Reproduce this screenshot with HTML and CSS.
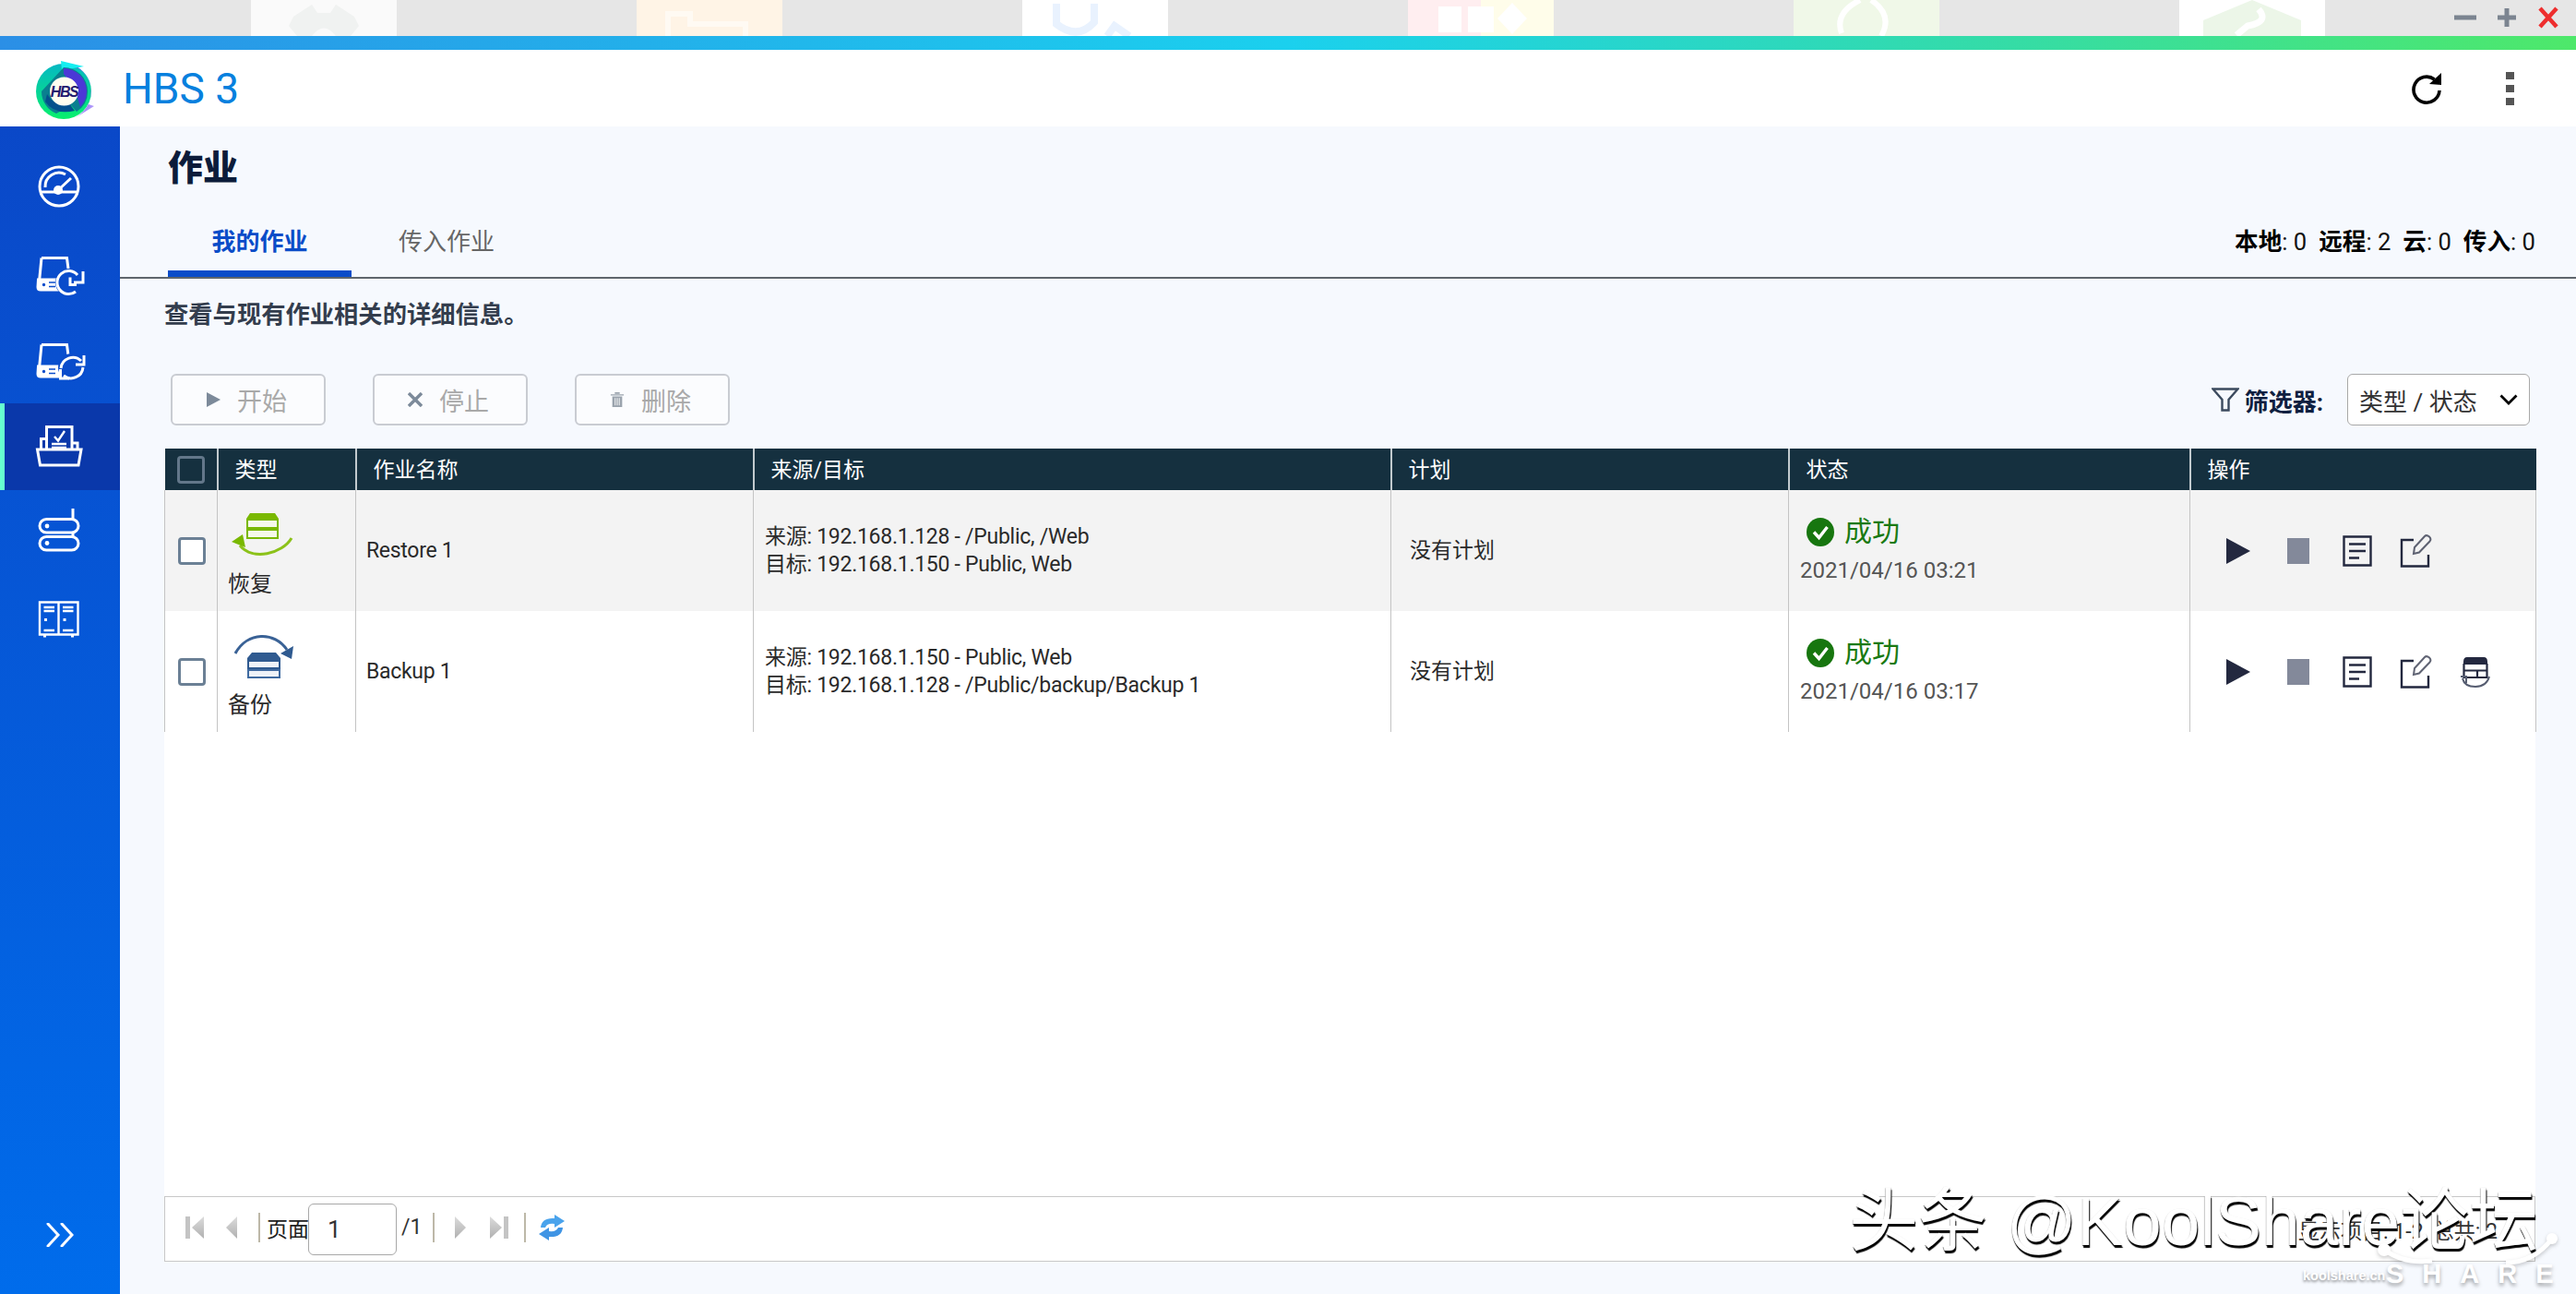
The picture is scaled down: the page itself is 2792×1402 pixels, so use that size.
FILE: index.html
```html
<!DOCTYPE html>
<html lang="zh-CN">
<head>
<meta charset="utf-8">
<title>HBS 3</title>
<link rel="stylesheet" href="styles.css">
</head>
<body>
<svg class="defs" width="0" height="0" aria-hidden="true">
  <defs>
    <symbol id="i-play" viewBox="0 0 26 28"><path d="M0 0 L26 14 L0 28 Z"/></symbol>
    <symbol id="i-doc" viewBox="0 0 32 34"><path d="M1.5 1.5 H30.500 V32.500 H1.500 Z M7 9.500 H25 M7 17 H25 M7 24.500 H18" fill="none" stroke-width="2.400"/></symbol>
    <symbol id="i-edit" viewBox="0 0 36 36"><path d="M15 6 H2 V34.500 H31 V22" fill="none" stroke-width="2.400"/><path d="M15 21 L16 14 L27 2 Q29 0 32 2.500 Q34.500 5 32.500 7.500 L21 19.500 Z" fill="none" stroke-width="2" opacity=".72"/></symbol>
    <symbol id="i-ok" viewBox="0 0 30 31"><ellipse cx="15" cy="15.500" rx="15" ry="15.500" fill="#17760f"/><path d="M8 15.500 L13.500 21.500 L22.500 10" fill="none" stroke="#fff" stroke-width="3.400"/></symbol>
    <symbol id="i-device" viewBox="0 0 70 70"><path d="M15 18.500 H42.500 L44.500 34 M15 18.500 L12.500 44" fill="none" stroke="#fff" stroke-width="3"/><path d="M11.500 42 H33 V53 H14 Q11 53 11 50 Z" fill="#fff"/><circle cx="17.500" cy="47.500" r="3.200" fill="#0a4ccb"/><path d="M23 45 H30 M23 49.500 H30" stroke="#0a4ccb" stroke-width="1.600"/></symbol>
  </defs>
</svg>

<div class="backdrop">
  <div class="tile tile-white"><svg class="tile-glyph" viewBox="0 0 158 39"><path d="M66 5 L72 14 L86 14 L92 5 L112 18 L117 28 L108 39 L50 39 L41 28 L46 18 Z" fill="#f0f2f1"/><path d="M66 39 Q79 22 92 39 Z" fill="#fafafa"/></svg></div>
  <div class="tile tile-peach"><svg class="tile-glyph" viewBox="0 0 158 39"><path d="M34 39 V15 H58 V26 H118 V39" fill="none" stroke="#fffaf3" stroke-width="6"/></svg></div>
  <div class="tile tile-pure"><svg class="tile-glyph" viewBox="0 0 158 39"><path d="M37 4 V26 Q60 44 78 24 V4 M92 39 L100 28 L116 39" fill="none" stroke="#e9f2fe" stroke-width="8"/></svg></div>
  <div class="tile tile-pink"><svg class="tile-glyph" viewBox="0 0 158 39"><path d="M33 7 H58 V35 H33 Z M65 7 H93 V35 H65 Z M113 3 L129 20 L113 37 L97 20 Z" fill="#fff"/></svg></div>
  <div class="tile tile-green"><svg class="tile-glyph" viewBox="0 0 158 39"><path d="M52 36 Q44 14 72 0 M95 39 Q108 16 84 0" fill="none" stroke="#fff" stroke-width="6"/></svg></div>
  <div class="tile tile-pure"><svg class="tile-glyph" viewBox="0 0 158 39"><path d="M26 39 V22 L79 0 L132 22 V39 Z" fill="#ecf6e8"/><path d="M86 10 Q98 24 74 28 L62 38" fill="none" stroke="#fff" stroke-width="7"/></svg></div>
  <div class="win-ctrls">
    <svg class="win-ctrl" viewBox="0 0 24 24"><path d="M0 12 H24" stroke="#7b8490" stroke-width="5"/></svg>
    <svg class="win-ctrl" viewBox="0 0 24 24"><path d="M2 12 H22 M12 2 V22" stroke="#7b8490" stroke-width="5"/></svg>
    <svg class="win-ctrl" viewBox="0 0 24 24"><path d="M3 2 L21 22 M21 2 L3 22" stroke="#ee2e2e" stroke-width="4.500"/></svg>
  </div>
</div>
<div class="accent"></div>

<header class="app-header">
  <svg class="logo" viewBox="0 0 64 64">
    <defs>
      <linearGradient id="lg-a" x1="0" y1="0" x2="0" y2="1"><stop offset="0" stop-color="#06b8c4"/><stop offset="1" stop-color="#07f06c"/></linearGradient>
      <linearGradient id="lg-b" x1="0" y1="0" x2="1" y2="1"><stop offset="0" stop-color="#2e46d8"/><stop offset="1" stop-color="#c4a4ff"/></linearGradient>
    </defs>
    <circle cx="30" cy="33" r="30" fill="url(#lg-a)"/>
    <path d="M28 3 Q58 6 60 33 Q59 52 42 62 L63 49 L57 47 Q66 20 44 6 Z" fill="url(#lg-b)"/>
    <path d="M27 0 L52 6 L28 10 Z" fill="#14eef0"/>
    <path d="M30 7 A26 26 0 0 1 56 33 A26 26 0 0 1 44 55 L38 48 L22 57 A26 26 0 0 1 6 33 Z" fill="#0a7f8f"/>
    <path d="M30 8 A25 25 0 0 1 55 33 A25 25 0 0 1 48 50 L42 30 L30 14 Z" fill="#4b38d6"/>
    <path d="M10 44 Q20 59 42 54 L36 46 Q20 50 12 36 Z" fill="#04508c"/>
    <circle cx="30.500" cy="33" r="15.500" fill="#fffdf0"/>
    <text class="logo-text" x="30.500" y="38.500">HBS</text>
  </svg>
  <h1 class="app-name">HBS 3</h1>
  <div class="header-actions">
    <svg class="refresh" viewBox="0 0 34 34"><path d="M25.500 7 A14 14 0 1 0 31 19" fill="none" stroke="#000" stroke-width="3.600"/><path d="M20 12 L33 0 V13 Z" fill="#000"/></svg>
    <div class="dots"><span></span><span></span><span></span></div>
  </div>
</header>

<div class="shell">
  <aside class="sidebar">
    <nav class="nav">
      <a class="nav-item"><svg class="nav-icon" viewBox="0 0 70 70" fill="none" stroke="#fff" stroke-width="3"><circle cx="34" cy="35" r="21"/><path d="M13 41 H55"/><circle cx="33" cy="39" r="5" fill="#fff" stroke="none"/><path d="M33 39 L47 26 M19 36 A15 15 0 0 1 41 22"/></svg></a>
      <a class="nav-item"><svg class="nav-icon" viewBox="0 0 70 70" fill="none" stroke="#fff" stroke-width="3"><use href="#i-device"/><circle cx="45" cy="45" r="15" fill="#0a4ccb" stroke="none"/><path d="M54 37 A12.500 12.500 0 1 0 52 55"/><path d="M46 39.500 V47.500 H53"/><path d="M60 33 V45 H50"/></svg></a>
      <a class="nav-item"><svg class="nav-icon" viewBox="0 0 70 70" fill="none" stroke="#fff" stroke-width="3"><use href="#i-device"/><circle cx="48" cy="43" r="15" fill="#0a4ccb" stroke="none"/><path d="M36 44 A13 13 0 0 1 58 36 M60 43 A13 13 0 0 1 39 52"/><path d="M61 30 V40 H52 M35.500 45 V55 H45"/></svg></a>
      <a class="nav-item nav-active"><svg class="nav-icon" viewBox="0 0 70 70" fill="none" stroke="#fff" stroke-width="3"><path d="M10.500 38 H58 L55 55 H13.500 Z"/><path d="M20.500 38 V13.500 H48 V38 M20 26.500 H14.500 V38 M48 31 H54 V38"/><path d="M29 24 L33 28.500 L40 18 M26 32 H42 M26 36 H42" stroke-width="2.400"/></svg></a>
      <a class="nav-item"><svg class="nav-icon" viewBox="0 0 70 70" fill="none" stroke="#fff" stroke-width="3"><rect x="13" y="19.500" width="42" height="14.500" rx="7.250"/><rect x="13" y="38.500" width="42" height="14.500" rx="7.250"/><path d="M49 8 V20 M49 34 V38"/><circle cx="21" cy="27" r="2.400" fill="#fff" stroke="none"/><circle cx="21" cy="45.500" r="2.400" fill="#fff" stroke="none"/></svg></a>
      <a class="nav-item"><svg class="nav-icon" viewBox="0 0 70 70" fill="none" stroke="#fff" stroke-width="2.400"><path d="M13 15.500 H54.500 V50.500 H13 Z M33.500 15.500 V50.500"/><path d="M17.500 21 H29 M17.500 25 H29 M38 21 H49.500 M38 25 H49.500 M17.500 46 H29 M38 46 H49.500"/><path d="M18 34.500 H21 M38.500 34.500 H41.500" stroke-width="3"/><path d="M17 52 H20 M47 52 H50" stroke-width="3"/></svg></a>
    </nav>
    <svg class="collapse" viewBox="0 0 30 26" fill="none" stroke="#fff" stroke-width="3" stroke-linecap="round"><path d="M2 1 L13 13 L2 25 M17 1 L28 13 L17 25"/></svg>
  </aside>

  <main class="main">
    <h2 class="page-title">作业</h2>
    <div class="tabbar">
      <div class="tabs">
        <span class="tab tab-active">我的作业</span>
        <span class="tab">传入作业</span>
      </div>
      <div class="counters">
        <span><b>本地</b>: 0</span><span><b>远程</b>: 2</span><span><b>云</b>: 0</span><span><b>传入</b>: 0</span>
      </div>
    </div>

    <div class="content">
      <p class="desc">查看与现有作业相关的详细信息。</p>
      <div class="toolbar">
        <div class="btn-group">
          <button class="btn"><svg class="btn-icon" viewBox="0 0 16 16"><path d="M1 0 L16 8 L1 16 Z" fill="#7c8a9a"/></svg>开始</button>
          <button class="btn"><svg class="btn-icon" viewBox="0 0 16 16"><path d="M1 1 L15 15 M15 1 L1 15" stroke="#7c8a9a" stroke-width="3.400"/></svg>停止</button>
          <button class="btn"><svg class="btn-icon" viewBox="0 0 16 18"><path d="M2 5 H14 V18 H2 Z M0 2.500 H16 V4 H0 Z M5 0 H11 V2 H5 Z" fill="#9aa3ad"/><path d="M5.500 7 V16 M8 7 V16 M10.500 7 V16" stroke="#fff" stroke-width="1"/></svg>删除</button>
        </div>
        <div class="filter">
          <svg class="filter-icon" viewBox="0 0 30 26"><path d="M1.500 1.500 H28.500 L18.500 13 V24.500 L11.500 24.500 V13 Z" fill="none" stroke="#3b4a5e" stroke-width="2.400"/></svg>
          <span class="filter-label">筛选器:</span>
          <div class="select"><span>类型 / 状态</span><svg class="chevron" viewBox="0 0 20 12"><path d="M1.500 1.500 L10 10 L18.500 1.500" fill="none" stroke="#000" stroke-width="2.800"/></svg></div>
        </div>
      </div>

      <div class="table-panel">
        <table class="jobs">
          <colgroup>
            <col class="c-check"><col class="c-type"><col class="c-name"><col class="c-src"><col class="c-plan"><col class="c-status"><col class="c-ops">
          </colgroup>
          <thead>
            <tr>
              <th class="th-check"><span class="check check-head"></span></th>
              <th>类型</th><th>作业名称</th><th>来源/目标</th><th>计划</th><th>状态</th><th>操作</th>
            </tr>
          </thead>
          <tbody>
            <tr class="row-alt">
              <td class="td-check"><span class="check"></span></td>
              <td class="td-type">
                <svg class="type-icon" viewBox="0 0 70 52">
                  <path d="M19 9 L23 3 H50 L54 9 V11 H19 Z" fill="#79b800"/>
                  <rect x="20" y="10" width="33" height="9" fill="#f5f8ea" stroke="#79b800" stroke-width="2"/>
                  <rect x="20" y="21" width="33" height="9" fill="#f5f8ea" stroke="#79b800" stroke-width="2"/>
                  <path d="M68 30 C58 47 26 55 12 38" fill="none" stroke="#8cc21a" stroke-width="3"/>
                  <path d="M3 34 L15 26 L18 40 Z" fill="#79b800"/>
                </svg>
                <span class="type-label">恢复</span>
              </td>
              <td class="td-name">Restore 1</td>
              <td class="td-src">来源: 192.168.1.128 - /Public, /Web<br>目标: 192.168.1.150 - Public, Web</td>
              <td class="td-plan">没有计划</td>
              <td class="td-status">
                <div class="status"><svg class="ok-icon"><use href="#i-ok"/></svg><span class="status-text">成功</span></div>
                <div class="status-date">2021/04/16 03:21</div>
              </td>
              <td class="td-ops">
                <div class="ops">
                  <svg class="op op-play"><use href="#i-play"/></svg>
                  <span class="op-stop"></span>
                  <svg class="op op-doc"><use href="#i-doc"/></svg>
                  <svg class="op op-edit"><use href="#i-edit"/></svg>
                </div>
              </td>
            </tr>
            <tr>
              <td class="td-check"><span class="check"></span></td>
              <td class="td-type">
                <svg class="type-icon" viewBox="0 0 70 52">
                  <path d="M7 24 C20 0 50 0 63 20" fill="none" stroke="#3a6296" stroke-width="3"/>
                  <path d="M70 16 L68 30 L56 24 Z" fill="#2f5a90"/>
                  <path d="M20 29 L25 23 H51 L56 29 V33 H20 Z" fill="#2f5a90"/>
                  <rect x="21" y="32" width="34" height="8" fill="#eef2f8" stroke="#2f5a90" stroke-width="2"/>
                  <rect x="21" y="42" width="34" height="8" fill="#eef2f8" stroke="#3f6aa0" stroke-width="2"/>
                </svg>
                <span class="type-label">备份</span>
              </td>
              <td class="td-name">Backup 1</td>
              <td class="td-src">来源: 192.168.1.150 - Public, Web<br>目标: 192.168.1.128 - /Public/backup/Backup 1</td>
              <td class="td-plan">没有计划</td>
              <td class="td-status">
                <div class="status"><svg class="ok-icon"><use href="#i-ok"/></svg><span class="status-text">成功</span></div>
                <div class="status-date">2021/04/16 03:17</div>
              </td>
              <td class="td-ops">
                <div class="ops">
                  <svg class="op op-play"><use href="#i-play"/></svg>
                  <span class="op-stop"></span>
                  <svg class="op op-doc"><use href="#i-doc"/></svg>
                  <svg class="op op-edit"><use href="#i-edit"/></svg>
                  <svg class="op op-sync" viewBox="0 0 32 34"><path d="M3 6 Q3 1 7 1 H25 Q29 1 29 6 V9 H3 Z" fill="#23283f"/><path d="M3.500 8 V23 H28.500 V8 M3.500 15.500 H28.500 M18 15.500 V23" fill="none" stroke="#23283f" stroke-width="2.200"/><path d="M2 24 Q4 33 16 33 Q28 33 31 22" fill="none" stroke="#555c70" stroke-width="2"/><path d="M0 22 H6 V29" fill="none" stroke="#555c70" stroke-width="2"/></svg>
                </div>
              </td>
            </tr>
          </tbody>
        </table>
      </div>

      <div class="pager">
        <div class="pager-left">
          <svg class="pg pg-first" viewBox="0 0 20 24"><rect width="5" height="24" fill="#c4c4c4"/><path d="M20 0 V24 L7 12 Z" fill="url(#pg-grad)"/></svg>
          <svg class="pg pg-prev" viewBox="0 0 12 24"><path d="M12 0 V24 L0 12 Z" fill="url(#pg-grad)"/></svg>
          <span class="pg-sep pg-sep-a"></span>
          <span class="pg-label">页面</span>
          <input class="pg-input" value="1" aria-label="页面">
          <span class="pg-total">/1</span>
          <span class="pg-sep pg-sep-b"></span>
          <svg class="pg pg-next" viewBox="0 0 12 24"><path d="M0 0 V24 L12 12 Z" fill="url(#pg-grad)"/></svg>
          <svg class="pg pg-last" viewBox="0 0 20 24"><path d="M0 0 V24 L13 12 Z" fill="url(#pg-grad)"/><rect x="15" width="5" height="24" fill="#c4c4c4"/></svg>
          <span class="pg-sep pg-sep-c"></span>
          <svg class="pg-refresh" viewBox="0 0 30 28" fill="none"><path d="M3 14 Q4 3 18 4 L18 0 L29 7 L18 14 L18 10 Q10 9 8 14 Z" fill="#4aa3ec"/><path d="M27 14 Q26 25 12 24 L12 28 L1 21 L12 14 L12 18 Q20 19 22 14 Z" fill="#3f94e4"/></svg>
          <svg class="defs" width="0" height="0" aria-hidden="true"><defs><linearGradient id="pg-grad" x1="0" y1="0" x2="0" y2="1"><stop offset="0" stop-color="#dcdcdc"/><stop offset="1" stop-color="#b0b0b0"/></linearGradient></defs></svg>
        </div>
        <span class="pager-info">显示项目: 1-2, 总共: 2</span>
      </div>
    </div>
  </main>
</div>

<div class="wm-main">头条 @KoolShare论坛</div>
<svg class="wm-logo" viewBox="0 0 200 80" fill="none"><circle cx="8" cy="62" r="7" fill="#fff"/><circle cx="190" cy="50" r="6" fill="#fff"/><path d="M8 62 Q30 78 60 74 M140 76 Q170 76 190 50" stroke="#fff" stroke-width="5"/></svg>
<div class="wm-site">koolshare.cn</div>
<div class="wm-share">SHARE</div>
</body>
</html>
```

FILE: styles.css
```css
* { box-sizing: border-box; }
html, body { margin: 0; height: 1402px; overflow: hidden; }
body {
  position: relative;
  display: flex;
  flex-direction: column;
  font-family: Roboto, "Noto Sans CJK SC", sans-serif;
  color: #222;
  background: #f6f9fe;
}
.defs { position: absolute; }

/* desktop strip behind the window */
.backdrop {
  height: 39px;
  flex: none;
  display: flex;
  gap: 260px;
  padding-left: 272px;
  background: #e6e6e6;
  overflow: hidden;
}
.tile { width: 158px; height: 39px; flex: none; }
.tile-white { background: #fafafa; }
.tile-peach { background: #fff4e6; }
.tile-pure { background: #fff; }
.tile-pink { background: linear-gradient(90deg, #ffeef0 0 50%, #fffdea 50%); }
.tile-green { background: #f0f8e8; }
.tile-glyph { display: block; width: 158px; height: 39px; }
.win-ctrls {
  position: absolute;
  top: 7px;
  right: 18px;
  display: flex;
  gap: 21px;
}
.win-ctrl { width: 24px; height: 24px; display: block; }

.accent {
  height: 15px;
  flex: none;
  background: linear-gradient(90deg, #2b8fe6 0%, #1bd0ee 50%, #35dca6 78%, #4ee86a 100%);
}

.app-header {
  height: 83px;
  flex: none;
  display: flex;
  align-items: center;
  padding-left: 39px;
  background: #fff;
}
.logo { width: 64px; height: 64px; display: block; margin-top: 5px; }
.logo-text { font: italic 700 16px "Liberation Sans", sans-serif; fill: #241a6e; text-anchor: middle; letter-spacing: -1.500px; }
.app-name {
  margin: 0 0 0 30px;
  font-size: 46px;
  line-height: 50px;
  font-weight: 400;
  color: #0680de;
}
.header-actions {
  margin-left: auto;
  padding-right: 67px;
  display: flex;
  align-items: center;
  gap: 69px;
}
.refresh { width: 34px; height: 34px; display: block; }
.dots { display: flex; flex-direction: column; gap: 6px; }
.dots span { width: 9px; height: 8px; background: #555; display: block; }

.shell { flex: 1; display: flex; min-height: 0; }

.sidebar {
  width: 130px;
  flex: none;
  display: flex;
  flex-direction: column;
  align-items: stretch;
  background: linear-gradient(180deg, #0a48c8 0%, #006ceb 100%);
}
.nav { padding-top: 18px; display: flex; flex-direction: column; }
.nav-item {
  height: 94px;
  display: flex;
  align-items: center;
  justify-content: center;
  border-left: 5px solid transparent;
  padding-right: 5px;
}
.nav-active { background: #0a38aa; border-left-color: #66ffd0; }
.nav-icon { width: 70px; height: 70px; display: block; }
.collapse { width: 30px; height: 26px; margin: auto 0 51px 50px; display: block; }

.main { flex: 1; min-width: 0; display: flex; flex-direction: column; }
.page-title {
  margin: 0;
  height: 95px;
  padding: 23px 0 0 52px;
  font-size: 38px;
  line-height: 44px;
  font-weight: 900;
  color: #0c1c3a;
}
.tabbar {
  height: 70px;
  flex: none;
  display: flex;
  justify-content: space-between;
  padding: 0 44px 0 52px;
  border-bottom: 2px solid #5f666c;
}
.tabs { display: flex; }
.tab {
  height: 68px;
  padding-top: 10px;
  font-size: 26px;
  line-height: 40px;
  color: #666;
}
.tab + .tab { margin-left: 51px; }
.tab-active {
  width: 199px;
  text-align: center;
  font-weight: 700;
  color: #0a4cc8;
  border-bottom: 7px solid #0a4cc8;
}
.counters {
  display: flex;
  gap: 13px;
  font-size: 25.600px;
  line-height: 40px;
  padding-top: 10px;
  color: #111;
}
.counters b { color: #000; font-weight: 700; }

.content {
  flex: 1;
  min-height: 0;
  display: flex;
  flex-direction: column;
  padding: 19px 44px 35px 48px;
}
.desc {
  margin: 0;
  font-size: 26.300px;
  line-height: 40px;
  font-weight: 700;
  color: #333d4d;
}
.toolbar {
  margin-top: 44px;
  height: 56px;
  flex: none;
  display: flex;
  justify-content: space-between;
  padding: 0 6px 0 7px;
}
.btn-group { display: flex; gap: 51px; }
.btn {
  width: 168px;
  height: 56px;
  display: flex;
  align-items: center;
  justify-content: center;
  gap: 18px;
  padding: 0 4px 0 0;
  font: 27px Roboto, "Noto Sans CJK SC", sans-serif;
  color: #a9a9a9;
  background: #fbfcfe;
  border: 2px solid #c9ccd2;
  border-radius: 6px;
}
.btn-icon { width: 16px; height: 16px; display: block; }
.filter { display: flex; align-items: center; }
.filter-icon { width: 30px; height: 26px; display: block; margin-right: 6px; }
.filter-label { font-size: 26px; font-weight: 700; color: #0f2040; margin-right: 26px; }
.select {
  width: 198px;
  height: 56px;
  display: flex;
  align-items: center;
  justify-content: space-between;
  padding: 0 12px 0 12px;
  font-size: 26px;
  color: #333;
  background: #fff;
  border: 1.500px solid #a8a8a8;
  border-radius: 6px;
}
.chevron { width: 20px; height: 12px; display: block; }

.table-panel { margin-top: 25px; flex: 1; min-height: 0; background: #fff; }
.jobs {
  width: 2570px;
  table-layout: fixed;
  border-collapse: collapse;
  font-size: 23px;
}
.c-check { width: 57px; }
.c-type { width: 150px; }
.c-name { width: 431px; }
.c-src { width: 691px; }
.c-plan { width: 431px; }
.c-status { width: 435px; }
.c-ops { width: 375px; }
.jobs th {
  height: 45px;
  padding: 0 0 3px 18px;
  text-align: left;
  font-weight: 400;
  color: #fff;
  background: #15303f;
  border-left: 2px solid #c2cace;
}
.jobs th:first-child { border-left: 0; }
.jobs .th-check { padding: 0 0 0 13px; }
.jobs td {
  height: 131px;
  padding: 0 0 0 11px;
  vertical-align: middle;
  line-height: 30px;
  color: #2a2a2a;
  border-left: 1.500px solid #c4c4c4;
}
.jobs td:last-child { border-right: 1.500px solid #c4c4c4; }
.row-alt { background: #f3f3f3; }
.check {
  display: block;
  width: 30px;
  height: 30px;
  border: 3px solid #6b8095;
  border-radius: 4px;
  background: #fff;
}
.check-head { background: transparent; border-color: #63778a; }
.jobs .td-check { padding-left: 14px; }
.jobs .td-type { vertical-align: top; padding: 22px 0 0 11px; }
.type-icon { width: 70px; height: 52px; display: block; margin-left: 1px; }
.type-label { display: block; margin-top: 13px; font-size: 24px; }
.jobs .td-name { letter-spacing: -.3px; }
.jobs .td-src { padding-left: 12px; letter-spacing: -.27px; }
.jobs .td-plan { padding-left: 20px; }
.jobs .td-status { padding-left: 12px; vertical-align: top; padding-top: 26px; }
.status { display: flex; align-items: center; padding-left: 7px; gap: 11px; height: 38px; }
.ok-icon { width: 30px; height: 31px; display: block; }
.status-text { font-size: 30px; color: #1a7a12; }
.status-date { margin-top: 6px; font-size: 24px; line-height: 34px; color: #555; }
.ops { display: flex; align-items: center; padding-left: 28px; height: 40px; }
.op { display: block; fill: #23283f; stroke: #23283f; stroke-width: 0; }
.op-play { width: 26px; height: 28px; }
.op-stop { width: 24px; height: 28px; margin-left: 40px; background: #83899a; display: block; }
.op-doc { width: 32px; height: 34px; margin-left: 36px; }
.op-edit { width: 36px; height: 36px; margin-left: 30px; }
.op-sync { width: 32px; height: 34px; margin-left: 30px; }

.pager {
  height: 71px;
  flex: none;
  display: flex;
  align-items: center;
  justify-content: space-between;
  padding: 0 40px 0 22px;
  background: #fff;
  border: 1.500px solid #c8c8c8;
}
.pager-left { display: flex; align-items: center; font-size: 23px; }
.pg { display: block; height: 24px; margin-bottom: 4px; }
.pg-first, .pg-last { width: 20px; }
.pg-prev, .pg-next { width: 12px; }
.pg-prev { margin-left: 24px; }
.pg-sep { width: 2px; height: 32px; background: #bdb8a8; display: block; margin-bottom: 4px; }
.pg-sep-a { margin-left: 23px; margin-right: 7px; }
.pg-sep-b { margin-left: 12px; margin-right: 22px; }
.pg-sep-c { margin-left: 17px; margin-right: 13px; }
.pg-last { margin-left: 26px; }
.pg-label { color: #222; margin-bottom: 4px; }
.pg-input {
  width: 96px;
  height: 56px;
  margin-left: -1px;
  padding: 0 0 0 20px;
  font: 26px Roboto, sans-serif;
  color: #333;
  background: #fff;
  border: 1.500px solid #a8a8a8;
  border-radius: 6px;
  outline: 0;
}
.pg-total { margin-left: 5px; margin-bottom: 4px; color: #333; }
.pg-refresh { width: 30px; height: 28px; display: block; margin-bottom: 3px; }
.pager-info { font-size: 23px; color: #333; }

/* photo watermark laid over the page */
.wm-main {
  position: absolute;
  left: 2004px;
  top: 1280px;
  font: 75px/86px "Liberation Sans", "Noto Sans CJK SC", sans-serif;
  color: #fff;
  white-space: nowrap;
  text-shadow: 1px 3px 1px #000, 0 1px 1px rgba(0, 0, 0, .8);
}
.wm-logo {
  position: absolute;
  left: 2576px;
  top: 1292px;
  width: 200px;
  height: 80px;
  filter: drop-shadow(0 2px 2px rgba(0, 0, 0, .2));
}
.wm-site {
  position: absolute;
  left: 2496px;
  top: 1372px;
  font: 700 14.500px/20px "Liberation Sans", sans-serif;
  color: #fff;
  text-shadow: 0 2px 3px rgba(0, 0, 0, .45);
}
.wm-share {
  position: absolute;
  left: 2586px;
  top: 1362px;
  font: 700 29px/36px "Liberation Sans", sans-serif;
  letter-spacing: 20px;
  color: #fff;
  text-shadow: 0 3px 4px rgba(0, 0, 0, .35);
}
```
